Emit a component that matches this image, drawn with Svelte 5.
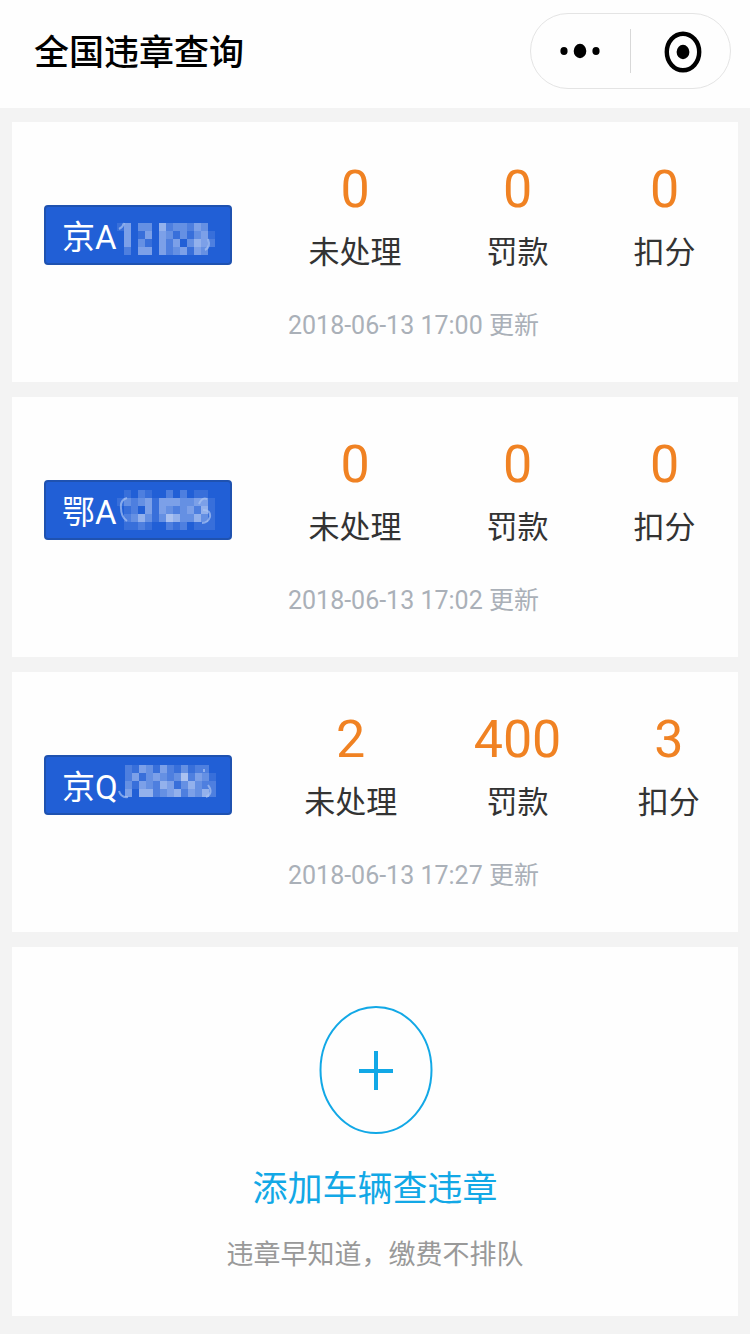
<script>
    // mosaic: one digit per block, higher is lighter
    let cars = [
        {
            plate: '京A',
            unhandled: 0,
            fine: 0,
            points: 0,
            updated: '2018-06-13 17:00',
            mosaic: ['00000000000000', '14033052332430', '04014043131341', '04031042403542', '02044042341430'],
            strokes: 'M2 14Q6 12 7 8M91 24Q94 32 88 35'
        },
        {
            plate: '鄂A',
            unhandled: 0,
            fine: 0,
            points: 0,
            updated: '2018-06-13 17:02',
            mosaic: ['01021002020110', '13234144433441', '01204143234251', '02353136533531', '01121002120111'],
            strokes: 'M10 8Q3 10 4 18Q4 27 10 31M90 9Q85 7 82 14M86 20Q94 20 93 27Q91 33 85 33'
        },
        {
            plate: '京Q',
            unhandled: 2,
            fine: 400,
            points: 3,
            updated: '2018-06-13 17:27',
            mosaic: ['02143142131220', '02413432362431', '03143254135322', '04055234524352', '00000000000000'],
            strokes: 'M1 26Q3 33 10 32M86 7V4M90 20Q96 28 88 32'
        }
    ];

    function addCar() {
        console.log('add car');
    }
</script>

<header>
    <h1>全国违章查询</h1>
    <div class="capsule">
        <button type="button" aria-label="更多">
            <svg width="42" height="20" viewBox="0 0 42 20">
                <ellipse cx="4" cy="10" rx="3.6" ry="4" />
                <ellipse cx="20" cy="10" rx="6.3" ry="7.2" />
                <ellipse cx="36" cy="10" rx="3.6" ry="4" />
            </svg>
        </button>
        <button type="button" aria-label="关闭">
            <svg width="44" height="44" viewBox="0 0 44 44">
                <ellipse cx="24" cy="23" rx="16.2" ry="18.3" fill="none" stroke="#000" stroke-width="4.4" />
                <ellipse cx="24" cy="23" rx="6.4" ry="7.2" />
            </svg>
        </button>
    </div>
</header>

<main>
    {#each cars as car}
    <section class="card car">
        <div class="plate">
            <span>{car.plate}</span>
            <svg width="98" height="40" viewBox="0 0 98 40" aria-hidden="true">
                {#each car.mosaic as row, y}
                    {#each row as level, x}
                    <rect x={x * 7} y={y * 8} width="7" height="8" fill="#dfe8fa" opacity={level * 0.12} />
                    {/each}
                {/each}
                <path d={car.strokes} fill="none" stroke="#a9c3f2" stroke-width="2" opacity="0.7" />
            </svg>
        </div>
        <dl class="stats">
            <div>
                <dt>未处理</dt>
                <dd>{car.unhandled}</dd>
            </div>
            <div>
                <dt>罚款</dt>
                <dd>{car.fine}</dd>
            </div>
            <div>
                <dt>扣分</dt>
                <dd>{car.points}</dd>
            </div>
        </dl>
        <p class="updated">{car.updated} 更新</p>
    </section>
    {/each}

    <button type="button" class="card add" on:click={addCar}>
        <svg width="116" height="130" viewBox="0 0 116 130" fill="none" stroke="#12a8e6">
            <ellipse cx="59" cy="64" rx="55.5" ry="63" stroke-width="2" />
            <path d="M42 65H76M59 45V84" stroke-width="4" />
        </svg>
        <span class="add-title">添加车辆查违章</span>
        <span class="add-note">违章早知道，缴费不排队</span>
    </button>
</main>

<style>
    :global(body) {
        background: #f3f3f3;
        font-family: Roboto, "Noto Sans CJK SC", sans-serif;
    }

    header {
        display: flex;
        align-items: center;
        justify-content: space-between;
        box-sizing: border-box;
        height: 108px;
        padding: 0 19px 6px 34px;
        background: #fefefe;
    }

    h1 {
        margin: 0;
        padding-top: 6px;
        font-size: 35px;
        font-weight: 500;
        line-height: 50px;
        color: #000;
    }

    .capsule {
        display: flex;
        box-sizing: border-box;
        width: 201px;
        height: 76px;
        border: 1px solid #e4e4e4;
        border-radius: 38px;
    }

    .capsule button {
        display: flex;
        flex: 1;
        align-items: center;
        justify-content: center;
        margin: 15px 0;
        padding: 0;
        border: 0;
        background: none;
    }

    .capsule button + button {
        border-left: 1px solid #d8d8d8;
    }

    .capsule svg {
        flex: none;
    }

    main {
        display: flex;
        flex-direction: column;
        gap: 15px;
        padding: 14px 12px 20px;
    }

    .card {
        background: #fefefe;
    }

    .car {
        display: grid;
        grid-template-columns: 254px 1fr;
        align-items: start;
        padding: 36px 0 38px;
    }

    .plate {
        display: flex;
        align-items: center;
        box-sizing: border-box;
        width: 188px;
        height: 60px;
        margin: 47px 0 0 32px;
        padding-left: 16px;
        border: 2px solid #1f52b0;
        border-radius: 4px;
        background: #215fd6;
        color: #fff;
        font-size: 33px;
        white-space: nowrap;
    }

    .stats {
        display: flex;
        justify-content: space-around;
        margin: 0;
    }

    .stats div {
        display: flex;
        flex-direction: column-reverse;
        align-items: center;
    }

    dt {
        font-size: 31px;
        line-height: 62px;
        color: #333;
    }

    dd {
        margin: 0;
        font-size: 52px;
        line-height: 64px;
        color: #f08223;
    }

    .updated {
        grid-column: 2;
        margin: 24px 0 0 22px;
        font-size: 25px;
        line-height: 36px;
        color: #aab0b8;
    }

    .add {
        display: flex;
        flex-direction: column;
        align-items: center;
        padding: 59px 0 40px;
        border: 0;
        font-family: inherit;
    }

    .add-title {
        margin-top: 28px;
        font-size: 35px;
        line-height: 52px;
        color: #12a8e6;
    }

    .add-note {
        margin-top: 18px;
        font-size: 27px;
        line-height: 42px;
        color: #999;
    }
</style>
